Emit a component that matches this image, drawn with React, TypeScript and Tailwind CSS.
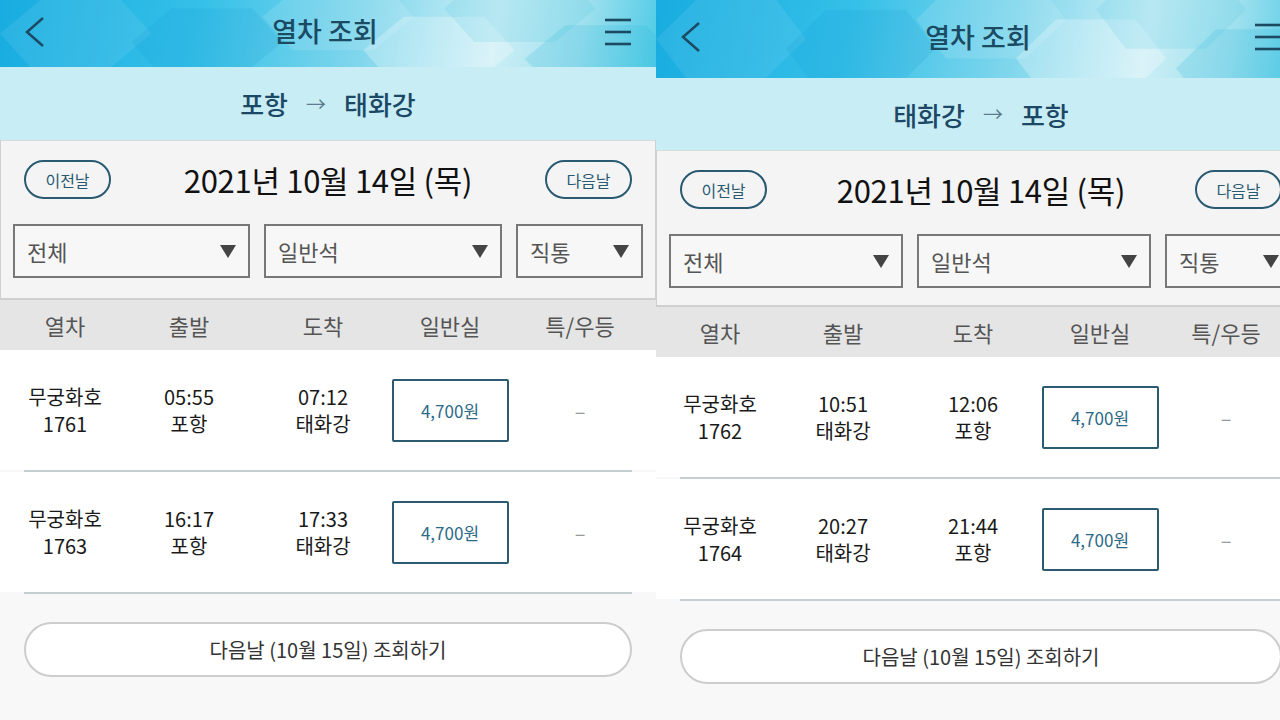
import React from 'react';

interface Train {
  name: string;
  no: string;
  dep: string;
  depSt: string;
  arr: string;
  arrSt: string;
  price: string;
}

interface PanelProps {
  width: string;
  headerClass: string;
  routeClass: string;
  dateClass: string;
  from: string;
  to: string;
  cols: string;
  selW: [string, string, string];
  trains: Train[];
}

const font = "font-['Noto_Sans_CJK_KR','Noto_Sans',sans-serif]";

const HeaderBg = () => (
  <svg className="absolute inset-0 h-full w-full" preserveAspectRatio="none" viewBox="0 0 650 80">
    <polygon points="40,0 120,0 150,40 110,80 30,80 0,40" fill="#ffffff" opacity="0.08" />
    <polygon points="170,10 250,10 280,50 240,90 160,90 130,50" fill="#0a8ccc" opacity="0.12" />
    <polygon points="300,-20 380,-20 410,20 370,60 290,60 260,20" fill="#ffffff" opacity="0.12" />
    <polygon points="400,20 480,20 510,60 470,100 390,100 360,60" fill="#ffffff" opacity="0.25" />
    <polygon points="480,-30 560,-30 590,10 550,50 470,50 440,10" fill="#3cc0e0" opacity="0.15" />
    <polygon points="560,30 640,30 670,70 630,110 550,110 520,70" fill="#2cb8de" opacity="0.2" />
  </svg>
);

const Caret = () => (
  <svg width="16" height="13" viewBox="0 0 16 13" className="shrink-0">
    <polygon points="0,0 16,0 8,13" fill="#444" />
  </svg>
);

const Panel: React.FC<PanelProps> = ({ width, headerClass, routeClass, dateClass, from, to, cols, selW, trains }) => (
  <div className={`${width} shrink-0 h-[720px] flex flex-col bg-[#f8f8f8]`}>
    {/* top bar */}
    <div
      className={`relative ${headerClass} shrink-0 overflow-hidden bg-[linear-gradient(100deg,#18ace0_0%,#34c0e8_30%,#7fd6ec_55%,#cdeff6_75%,#9fe0ee_88%,#4fcbe6_100%)]`}
    >
      <HeaderBg />
      <div className="relative flex h-full items-center justify-between px-[24px] pb-[4px]">
        <svg width="22" height="32" viewBox="0 0 22 32">
          <polyline points="19,2 3,16 19,30" fill="none" stroke="#1c4a62" strokeWidth="2.5" />
        </svg>
        <span className="text-[27px] font-medium text-[#1b4a63]">열차 조회</span>
        <svg width="28" height="28" viewBox="0 0 28 28">
          <line x1="1" y1="2" x2="27" y2="2" stroke="#1c4a62" strokeWidth="2.6" />
          <line x1="1" y1="14" x2="27" y2="14" stroke="#1c4a62" strokeWidth="2.6" />
          <line x1="1" y1="26" x2="27" y2="26" stroke="#1c4a62" strokeWidth="2.6" />
        </svg>
      </div>
    </div>

    {/* route */}
    <div className={`${routeClass} shrink-0 bg-[#c8edf5] flex items-center justify-center gap-[18px] text-[26px] font-medium text-[#1c4866]`}>
      <span>{from}</span>
      <span className="text-[20px] font-normal text-[#5d7c8c]">→</span>
      <span>{to}</span>
    </div>

    {/* date + filters */}
    <div className={`${dateClass} shrink-0 bg-[#f4f4f4] border-t border-[#d6dcdc] border-b-2 border-b-[#cfcfcf] border-x border-x-[#d0d0d0] px-[12px] pt-[19px]`}>
      <div className="flex h-[39px] items-center justify-between px-[11px]">
        <button className="h-[39px] w-[87px] rounded-full border-2 border-[#2a5a72] text-[16px] text-[#2a5a72]">
          이전날
        </button>
        <span className="text-[31px] leading-[39px] tracking-[-0.3px] text-[#111]">2021년 10월 14일 (목)</span>
        <button className="h-[39px] w-[87px] rounded-full border-2 border-[#2a5a72] text-[16px] text-[#2a5a72]">
          다음날
        </button>
      </div>
      <div className="mt-[25px] flex gap-[14px]">
        {['전체', '일반석', '직통'].map((t, i) => (
          <div
            key={t}
            className={`${selW[i]} h-[54px] shrink-0 border-2 border-[#777] bg-[#f7f7f7] flex items-center justify-between pl-[12px] pr-[12px] text-[22px] text-[#555]`}
          >
            <span>{t}</span>
            <Caret />
          </div>
        ))}
      </div>
    </div>

    {/* column heads */}
    <div className={`h-[50px] shrink-0 bg-[#e5e5e5] grid ${cols} items-center text-center text-[22px] text-[#555]`}>
      <span>열차</span>
      <span>출발</span>
      <span>도착</span>
      <span>일반실</span>
      <span>특/우등</span>
    </div>

    {/* rows */}
    {trains.map((t) => (
      <div key={t.no} className="bg-white">
        <div className={`h-[120px] grid ${cols} items-center text-center text-[20px] leading-[27px] text-[#1a1a1a]`}>
          <div>
            <div>{t.name}</div>
            <div>{t.no}</div>
          </div>
          <div>
            <div>{t.dep}</div>
            <div>{t.depSt}</div>
          </div>
          <div>
            <div>{t.arr}</div>
            <div>{t.arrSt}</div>
          </div>
          <div className="flex justify-center">
            <div className="h-[63px] w-[117px] shrink-0 rounded-[2px] border-2 border-[#2c5a70] flex items-center justify-center text-[17px] text-[#2c6a88]">
              {t.price}
            </div>
          </div>
          <div className="text-[#999]">–</div>
        </div>
        <div className="bg-[#f8f8f8]">
          <div className="mx-[24px] h-[2px] bg-[#c5ced3]" />
        </div>
      </div>
    ))}

    {/* next day */}
    <div className="px-[24px] pt-[28px]">
      <button className="h-[55px] w-full rounded-full border-2 border-[#cdcdcd] bg-white text-[20px] text-[#333]">
        다음날 (10월 15일) 조회하기
      </button>
    </div>
  </div>
);

const App: React.FC = () => {
  const down: Train[] = [
    { name: '무궁화호', no: '1761', dep: '05:55', depSt: '포항', arr: '07:12', arrSt: '태화강', price: '4,700원' },
    { name: '무궁화호', no: '1763', dep: '16:17', depSt: '포항', arr: '17:33', arrSt: '태화강', price: '4,700원' },
  ];
  const up: Train[] = [
    { name: '무궁화호', no: '1762', dep: '10:51', depSt: '태화강', arr: '12:06', arrSt: '포항', price: '4,700원' },
    { name: '무궁화호', no: '1764', dep: '20:27', depSt: '태화강', arr: '21:44', arrSt: '포항', price: '4,700원' },
  ];

  return (
    <div className={`w-[1280px] h-[720px] overflow-hidden flex bg-white ${font}`}>
      <Panel
        width="w-[656px]"
        headerClass="h-[67px]"
        routeClass="h-[73px]"
        dateClass="h-[160px]"
        from="포항"
        to="태화강"
        cols="grid-cols-[130px_118px_150px_104px_156px]"
        selW={['w-[237px]', 'w-[238px]', 'w-[127px]']}
        trains={down}
      />
      <Panel
        width="w-[650px]"
        headerClass="h-[78px]"
        routeClass="h-[72px]"
        dateClass="h-[157px]"
        from="태화강"
        to="포항"
        cols="grid-cols-[128px_118px_142px_112px_140px]"
        selW={['w-[234px]', 'w-[234px]', 'w-[128px]']}
        trains={up}
      />
    </div>
  );
};

export default App;
